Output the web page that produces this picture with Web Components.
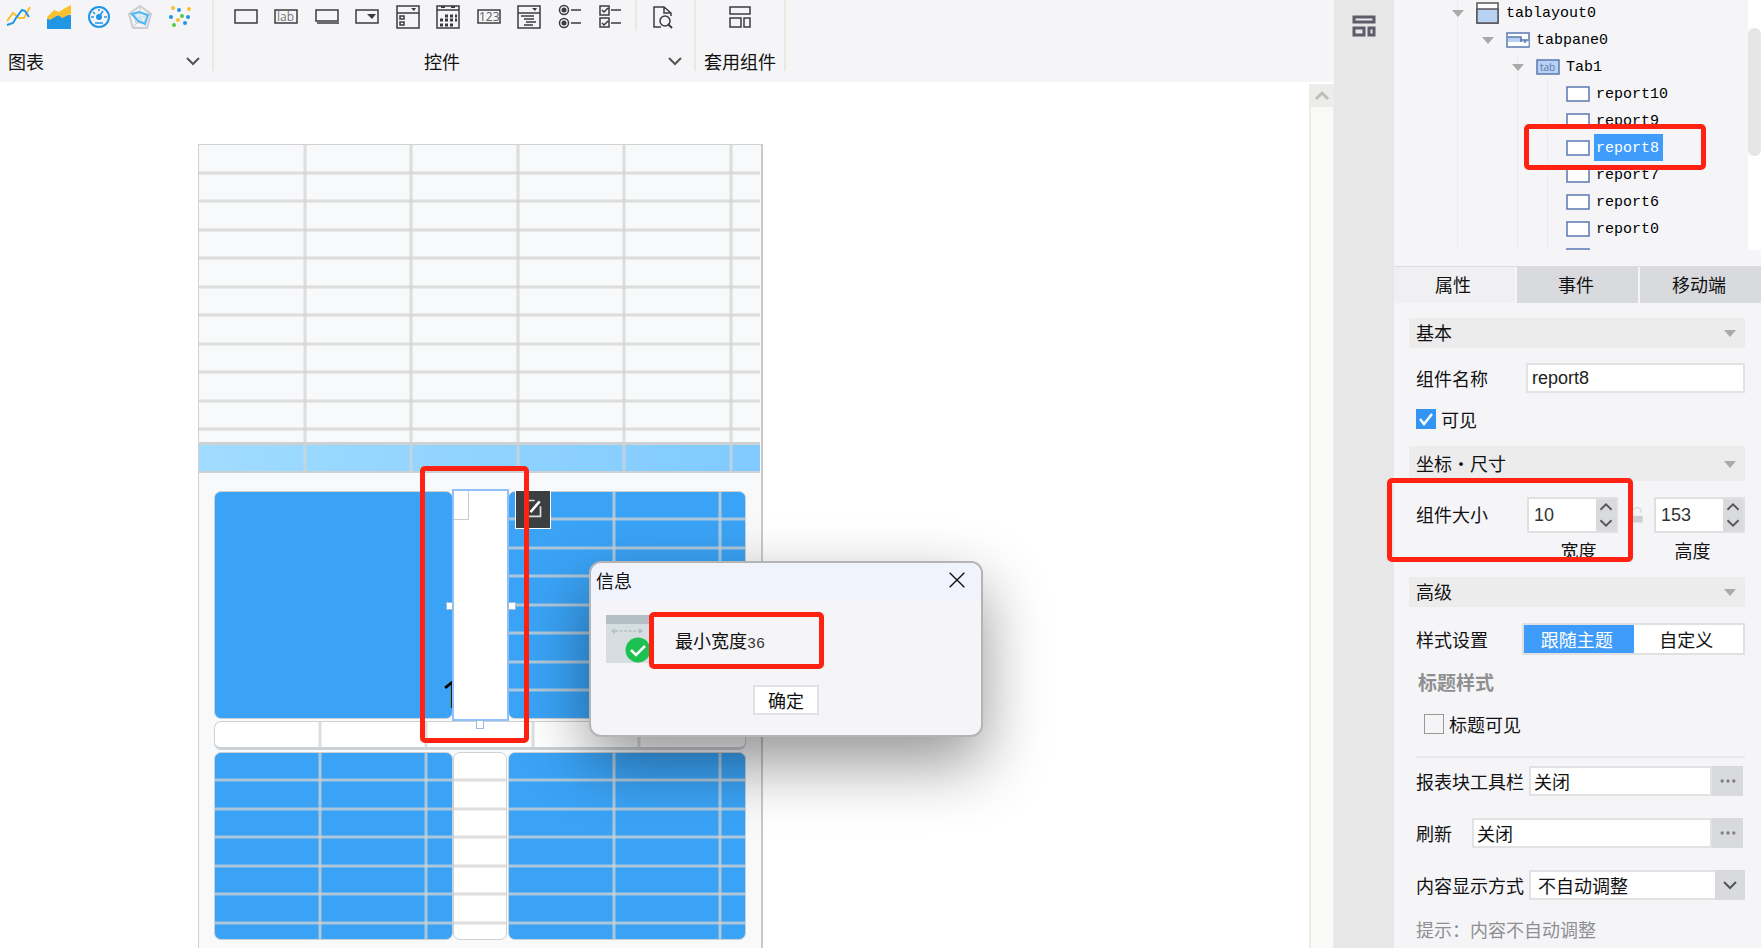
<!DOCTYPE html>
<html lang="zh-CN">
<head>
<meta charset="utf-8">
<title>报表设计器</title>
<style>
html,body{height:100%}
body{margin:0;overflow:hidden;background:#fff;color:#111;font:18px/24px "Noto Sans CJK SC",sans-serif}
</style>
</head>
<body>
<designer-app></designer-app>
<script>
const INK = '#3c3c40';
const GLYPHS = {
  line: '<g fill="none" stroke-width="2"><path stroke="#fbc02d" d="M1 16 7 8l6 5 5 0 6-11"/><path stroke="#1e96e6" d="M1 20l6-2 3-5 6-8 3 1 4 6"/></g>',
  area: '<path fill="#2196e3" d="M0 24V14l12-4 12 0v14z"/><path fill="#fbc02d" d="M0 12 7 5l5 2 6-4 6-3v9l-9 4-4-3-8 5-3-2z"/>',
  gauge: '<circle cx="12" cy="12" r="10" fill="none" stroke="#1e96e6" stroke-width="2"/><circle cx="12" cy="12" r="3" fill="#1e96e6"/><path stroke="#1e96e6" stroke-width="1.5" d="M12 12l4-6M4 12h3M17 12h3M12 4v2M6 7l2 2M8 18h8"/>',
  radar: '<g fill="none" stroke="#cdcdcf" stroke-width="2"><path d="M12 1l11 8-4 14H5L1 9z"/><path stroke-width="1" d="M12 1v12M1 9l11 4 11-4M5 23l7-10 7 10M12 7l6 4-2 7H8l-2-7z"/></g><path fill="#cfeafb" fill-opacity=".5" stroke="#4cb8f5" stroke-width="2" d="M4 9l7-2 9 3-3 9-7-3z"/>',
  scatter: '<g fill="#fbc02d"><circle cx="5" cy="3" r="2"/><circle cx="21" cy="4" r="2"/><circle cx="10" cy="15" r="2"/></g><g fill="#1e96e6"><circle cx="11" cy="5" r="2"/><circle cx="3" cy="12" r="2"/><circle cx="20" cy="12" r="2"/><circle cx="17" cy="18" r="2"/></g><g fill="#55c948"><circle cx="14" cy="11" r="2"/><circle cx="6" cy="20" r="2"/></g>',
  box: '<path class="s" d="M1 5h22v13H1z"/>',
  lab: '<path class="s" d="M1 5h22v13H1z"/><text x="3" y="16" font-size="12" font-family="Open Sans" fill="#777">lab</text>',
  field: '<path class="s" d="M1 5h22v11H1zM2 18h22"/>',
  combo: '<path class="s" d="M1 5h22v13H1z"/><path fill="#3c3c40" d="M12 9h9l-4 5z"/>',
  list: '<path class="s" d="M1 1h22v22H1zM1 8h22M4 11h4v3H4zM4 17h4v3H4z"/><path fill="#3c3c40" d="M15 3h5l-2 3z"/>',
  calendar: '<path class="s" d="M1 1h22v22H1zM1 5h22"/><path stroke="#3c3c40" stroke-width="3" stroke-dasharray="3 2" fill="none" d="M9 11h12M4 15h17M4 20h13"/><path stroke="#3c3c40" stroke-width="2" d="M5 2h4M15 2h4"/>',
  num: '<path class="s" d="M1 5h22v13H1z"/><text x="2" y="16" font-size="12" font-family="Noto Sans" fill="#666">123</text>',
  tree: '<path class="s" d="M1 1h22v22H1zM1 8h22M4 11h13M7 14h10M9 17h10M7 20h9"/><path fill="#3c3c40" d="M15 3h5l-2 3z"/>',
  radio: '<circle class="s" cx="6" cy="5" r="4.5"/><circle class="s" cx="6" cy="18" r="4.5"/><circle cx="6" cy="5" r="2.5" fill="#3c3c40"/><circle cx="6" cy="18" r="2.5" fill="#3c3c40"/><path class="s" d="M13 5h10M13 18h10"/>',
  check: '<path class="s" d="M2 1h9v9H2zM2 13h9v9H2zM4 5l2 2 4-4M4 18l2 2 4-4M13 5h10M13 18h10"/>',
  preview: '<path class="s" d="M11 22H4V2h10l7 6v3M14 2v6h6"/><circle class="s" cx="15" cy="16" r="5"/><path stroke="#3c3c40" stroke-width="2" d="M18 19l4 4"/>',
  blocks: '<path class="s" d="M2 2h20v7H2zM2 13h11v9H2zM16 13h6v9h-6z"/>',
  rail: '<path fill="none" stroke="#5d5d69" stroke-width="3" d="M2 3h20v5H2zM2 14h10v7H2zM17 14h5v7h-5z"/>',
  chevron: '<path fill="none" stroke="#555" stroke-width="2" d="M6 9l6 6 6-6"/>',
  up: '<path fill="none" stroke="#555" stroke-width="2" d="M6 15l6-6 6 6"/>',
  bigup: '<path fill="none" stroke="#bdbdbb" stroke-width="3" d="M6 15l6-6 6 6"/>',
  caret: '<path fill="#aaa" d="M6 9h12l-6 7z"/>',
  layout: '<path fill="#fff" stroke="#555" stroke-width="1.5" d="M1 2h21v20H1z"/><path fill="#b8d2f3" stroke="#555" stroke-width="1.5" d="M1 8h21v14H1z"/>',
  pane: '<path fill="#fff" stroke="#5878b0" stroke-width="1.5" d="M1 5h22v14H1z"/><path fill="#b8d2f3" d="M2 9h13v4h8v5H2z"/><path fill="#fff" d="M2 14h20v4H2z"/><path fill="none" stroke="#5878b0" stroke-width="1.5" d="M2 9h13v5M15 12h7M19 12v3"/>',
  tab: '<path fill="#b8d2f3" stroke="#5878b0" stroke-width="1.5" d="M1 5h22v14H1z"/><text x="4" y="16" font-size="10" font-family="Open Sans" fill="#5878b0">tab</text>',
  report: '<path fill="#fff" stroke="#5878b0" stroke-width="1.5" d="M1 5h22v14H1z"/>',
  edit: '<path fill="none" stroke="#ddd" stroke-width="2" d="M14 3H3v19h18V10"/><path stroke="#fff" stroke-width="3" d="M9 17 20 4"/>',
  close: '<path stroke="#111" stroke-width="1.5" d="M4 4l16 16M20 4 4 20"/>',
  lock: '<path fill="none" stroke="#ddd" stroke-width="2" d="M8 6q6-6 10 0v3"/><path fill="#cfcfd1" d="M4 13h16v8H4z"/>',
  dots: '<g fill="#808084"><circle cx="5" cy="12" r="2"/><circle cx="12" cy="12" r="2"/><circle cx="19" cy="12" r="2"/></g>'
};
const RESET = `<style>
*{box-sizing:border-box}
button,input,select{font:inherit;color:inherit;border:0;padding:0;margin:0;background:none;border-radius:0;outline:0;min-width:0}
button{display:flex;align-items:center;justify-content:center}
</style>`;
function define(name, markup) {
  customElements.define(name, class extends HTMLElement {
    connectedCallback() {
      if (this.shadowRoot) return;
      const root = this.attachShadow({mode: 'open'});
      root.innerHTML = RESET + (typeof markup === 'function' ? markup(this) : markup);
    }
  });
}

define('ui-icon', el => `<style>:host{display:block;flex:none;width:24px;height:24px}svg{display:block;width:100%;height:100%;overflow:visible}.s{fill:none;stroke:${INK};stroke-width:1.5}</style>
<svg viewBox="0 0 24 24" aria-hidden="true">${GLYPHS[el.getAttribute('name')]}</svg>`);

define('mark-box', `<style>:host{display:block;position:absolute;z-index:5;border:5px solid #ff2112;border-radius:5px;pointer-events:none;box-sizing:border-box}</style>`);

/* ribbon */
define('ribbon-group', `<style>
:host{display:flex;flex-direction:column;height:71px;border-right:2px solid #ebe9df;box-sizing:border-box}
.tools{display:flex;height:29px;padding-top:5px;justify-content:space-between;box-sizing:border-box}
footer{display:flex;margin-top:20px;align-items:center;height:24px}
</style><div class="tools" part="tools"><slot></slot></div><footer part="footer"><slot name="label"></slot></footer>`);

const tool = (n, t) => `<button title="${t}"><ui-icon name="${n}"></ui-icon></button>`;
define('tool-ribbon', `<style>
:host{display:flex;height:82px;background:#f5f5f8;flex:none}
.charts{width:214px}.charts::part(tools){margin:0 20px 0 6px}.charts::part(footer){padding:0 7px 0 8px}
.controls{width:482px}.controls::part(tools){margin:0 20px 0 20px}.controls::part(footer){padding:0 7px 0 210px}
.suite{width:90px}.suite::part(tools){justify-content:center}.suite::part(footer){justify-content:center}
[slot=label]{flex:none}
.more{margin-left:auto}
.ten{display:flex;justify-content:space-between;width:388px}
.sep{width:2px;height:31px;margin-top:-5px;background:#ebe9df}
</style>
<ribbon-group class="charts">${tool('line','折线图')}${tool('area','面积图')}${tool('gauge','仪表盘')}${tool('radar','雷达图')}${tool('scatter','散点图')}
<span slot="label">图表</span><button slot="label" class="more" aria-label="更多图表"><ui-icon name="chevron"></ui-icon></button></ribbon-group>
<ribbon-group class="controls"><div class="ten">${tool('box','文本')}${tool('lab','标签')}${tool('field','按钮')}${tool('combo','下拉框')}${tool('list','下拉复选框')}${tool('calendar','日期')}${tool('num','数字')}${tool('tree','下拉树')}${tool('radio','单选')}${tool('check','复选')}</div><span class="sep"></span>${tool('preview','查询')}
<span slot="label">控件</span><button slot="label" class="more" aria-label="更多控件"><ui-icon name="chevron"></ui-icon></button></ribbon-group>
<ribbon-group class="suite">${tool('blocks','套用组件')}<span slot="label">套用组件</span></ribbon-group>`);

/* canvas: a block ruled into report cells; cols and rows are line positions inside it */
define('report-block', el => {
  const list = a => (el.getAttribute(a) || '').split(' ').filter(Boolean);
  return `<style>
:host{display:block;position:absolute;overflow:hidden;box-sizing:border-box;border:1px solid #cdd1d4;border-radius:7px;background:#3aa3f6}
:host([plain]){background:#fff}
:host([flat]){border-radius:0;border-width:0 0 2px}
svg{position:absolute;left:0;top:0;width:100%;height:100%}line{stroke:#d3d3d3;stroke-opacity:.75;stroke-width:3}
</style><svg aria-hidden="true">${list('cols').map(x => `<line x1="${x}" x2="${x}" y1="0" y2="100%"/>`).join('')}${list('rows').map(y => `<line y1="${y}" y2="${y}" x1="0" x2="100%"/>`).join('')}</svg><slot></slot>`;
});

const LOWER = '27 56 84 113 141 170';
define('design-canvas', `<style>
:host{display:flex;flex:1;min-height:0;overflow:hidden;position:relative;background:#fff}
.stage{flex:1;position:relative;overflow:hidden}
.sheet{position:absolute;left:198px;top:62px;width:565px;bottom:-4px;background:#f8f9fb;border:1px solid #d2d2d2;border-right:2px solid #c9c9c9}
.selection{position:absolute;left:452px;top:407px;width:57px;height:232px;background:#fff;border:2px solid #8fc0fb}
.selection i{display:block;width:15px;height:29px;border:solid #ccc;border-width:0 1px 1px 0}
.handle{position:absolute;width:8px;height:8px;background:#fff;border:1px solid #9dbde0}
.value{position:absolute;left:226px;bottom:-1px;font:38px/52px "Noto Sans",sans-serif;color:#000}
.edit{position:absolute;left:515px;top:408px;width:36px;height:39px;background:#3c3f41;border:1px solid #fff;padding:0 0 4px}
.edit ui-icon{width:20px;height:22px}
.bar{width:25px;border:solid #efede2;border-width:0 1px 0 2px;background:#f9f9f7;flex:none;box-sizing:border-box;margin-top:2px}
.bar button{width:100%;height:23px;background:#ececea}
</style>
<div class="stage">
<div class="sheet"></div>
<report-block flat plain style="left:199px;top:63px;width:561px;height:300px;background:#f8f9fb;border-bottom-width:3px" cols="106 212 319 425 532" rows="28 56 85 113 142 170 199 227 256 284"></report-block>
<report-block flat style="left:199px;top:363px;width:561px;height:28px;background:linear-gradient(95deg,#a0dcff,#80caff)" cols="106 212 319 425 532"></report-block>
<report-block style="left:214px;top:409px;width:239px;height:228px"><span class="value">1</span></report-block>
<report-block style="left:508px;top:409px;width:238px;height:228px" cols="105 211" rows="27 56 84 113 141 170 198"></report-block>
<report-block plain style="left:214px;top:639px;width:532px;height:29px;border-bottom-width:3px" cols="105 211 318 424"></report-block>
<report-block style="left:214px;top:670px;width:239px;height:188px" cols="105 211" rows="${LOWER}"></report-block>
<report-block plain style="left:453px;top:670px;width:54px;height:188px" rows="${LOWER}"></report-block>
<report-block style="left:508px;top:670px;width:238px;height:188px" cols="105 211" rows="${LOWER}"></report-block>
<div class="selection"><i></i></div>
<span class="handle" style="left:446px;top:520px;width:7px"></span><span class="handle" style="left:508px;top:520px"></span><span class="handle" style="left:476px;top:638px;height:9px"></span>
<button class="edit" aria-label="编辑"><ui-icon name="edit"></ui-icon></button>
<mark-box style="left:420px;top:384px;width:109px;height:277px"></mark-box>
<message-dialog heading="信息">最小宽度<span style="font-family:'Liberation Mono',monospace;font-size:15px;color:#333">36</span></message-dialog>
</div>
<div class="bar"><button aria-label="向上滚动"><ui-icon name="bigup"></ui-icon></button></div>`);

define('message-dialog', el => `<style>
:host{display:flex;flex-direction:column;position:absolute;z-index:6;left:589px;top:479px;width:394px;height:176px;box-sizing:border-box;border:2px solid #b4b4b6;border-radius:12px;background:#f5f5f8;background-clip:padding-box;box-shadow:0 26px 64px rgba(0,0,0,.42)}
header{display:flex;align-items:center;justify-content:space-between;height:37px;flex:none;background:#f0f3fc;border-radius:10px 10px 0 0;padding:0 13px 3px 5px}
header ui-icon{width:22px;height:22px}
.body{display:flex;align-items:center;gap:21px;margin:15px 15px 0}
.pic{width:48px;height:48px;flex:none}
.text{padding-top:6px}
.ok{width:66px;height:30px;margin:22px auto 0;background:#fff;border:2px solid #e2e2e5}
mark-box{left:58px;top:49px;width:175px;height:57px}
</style>
<header><span>${el.getAttribute('heading')}</span><button aria-label="关闭"><ui-icon name="close"></ui-icon></button></header>
<div class="body"><svg class="pic" viewBox="0 0 48 48" aria-hidden="true"><path fill="#d6dee1" d="M0 0h48v48H0z"/><path fill="#b4bfc5" d="M0 0h48v9H0z"/><path stroke="#b4bfc5" stroke-width="1.5" stroke-dasharray="3 1.5" d="M9 16h24"/><path fill="#b4bfc5" d="M5 16l4-3v6zM37 16l-4-3v6z"/><circle cx="32" cy="35" r="12.5" fill="#1cc152"/><path fill="none" stroke="#fff" stroke-width="2.5" d="M25 35l5 5 9-9"/></svg>
<div class="text"><slot></slot></div></div>
<button class="ok">确定</button><mark-box></mark-box>`);

/* component tree */
define('tree-node', el => `<style>
:host{display:flex;align-items:center;height:27px;padding-left:calc(52px + var(--depth) * 30px);box-sizing:border-box;font:15px/24px "Liberation Mono",monospace;color:#000}
.twist{width:24px;height:24px;flex:none}
.icon{margin-left:6px}
span{height:27px;line-height:28px;padding:1px 4px 0 2px;margin-left:4px}
:host([selected]) span{background:#409cfa;color:#fff}
</style><div class="twist">${el.hasAttribute('open') ? '<ui-icon name="caret"></ui-icon>' : ''}</div><ui-icon class="icon" name="${el.getAttribute('icon')}"></ui-icon><span><slot></slot></span>`);

define('component-tree', `<style>
:host{display:flex;height:250px;overflow:hidden;flex:none}
.nodes{flex:1;margin-top:-1px;background:linear-gradient(#ececef,#ececef) 63px 0/1px 100% no-repeat,linear-gradient(#ececef,#ececef) 123px 54px/1px 100% no-repeat,linear-gradient(#ececef,#ececef) 153px 81px/1px 100% no-repeat}
.scroll{width:13px;background:#fff;padding-top:28px;box-sizing:border-box}
.scroll i{display:block;height:128px;background:#e6e6e7;border-radius:6px}
</style><div class="nodes">
<tree-node open icon="layout" style="--depth:0">tablayout0</tree-node>
<tree-node open icon="pane" style="--depth:1">tabpane0</tree-node>
<tree-node open icon="tab" style="--depth:2">Tab1</tree-node>
${['report10','report9','report8','report7','report6','report0','report4'].map(n => `<tree-node icon="report" style="--depth:3"${n === 'report8' ? ' selected' : ''}>${n}</tree-node>`).join('')}
</div><div class="scroll"><i></i></div>`);

/* property form */
define('section-bar', `<style>
:host{display:flex;justify-content:space-between;align-items:center;height:30px;margin:0 16px 0 15px;padding:0 3px 0 7px;background:#ececed;box-sizing:border-box}
span{padding-bottom:2px}
</style><span><slot></slot></span><ui-icon name="caret"></ui-icon>`);

define('number-spinner', el => `<style>
:host{display:flex;width:91px;height:36px;box-sizing:border-box;border:2px solid #e0e0e3;background:#fff}
input{flex:1;padding-left:5px;font:18px/24px "Liberation Sans",sans-serif;color:#333;appearance:textfield;-moz-appearance:textfield}
input::-webkit-inner-spin-button{appearance:none;display:none}
div{width:20px;background:#d9dadd}
button{width:20px;height:16px}ui-icon{width:22px;height:22px}
</style><input type="number" aria-label="${el.getAttribute('label')}" value="${el.getAttribute('value')}"><div><button aria-label="增加"><ui-icon name="up"></ui-icon></button><button aria-label="减少"><ui-icon name="chevron"></ui-icon></button></div>`);

define('property-panel', `<style>
:host{display:block;width:367px;flex:none;background:#f5f5f8;position:relative;z-index:2;height:100%}
nav{display:flex;gap:2px;margin-top:16px;border-top:1px solid #dcdcdf}
nav button{flex:1;height:36px;background:#d9dadd;padding:0 3px 3px 0}
nav button:first-child{background:#f0f0f2}
.row{display:flex;align-items:center;margin:0 16px 0 22px}
.row label{flex:none}
.field{flex:1;height:30px;border:2px solid #e2e2e5;background:#fff;padding:0 3px}
.latin{font-family:"Liberation Sans",sans-serif;color:#222;padding:0 4px}
.dots{width:31px;height:30px;background:#d9dadd;margin-right:2px}
.dots ui-icon{width:20px;height:20px}
input[type=checkbox]{appearance:none;width:20px;height:20px;margin:0 5px 0 0;border:1px solid #999;flex:none}
input[type=checkbox]:checked{background:#3395f3 url("data:image/svg+xml,%3Csvg xmlns='http://www.w3.org/2000/svg' viewBox='0 0 20 20'%3E%3Cpath fill='none' stroke='white' stroke-width='2.5' d='M4 10l4 5 8-10'/%3E%3C/svg%3E");border:0}
.size{align-items:flex-start}
.size label{line-height:34px;width:111px}
.dim{display:flex;flex-direction:column;align-items:center;gap:5px}
.seg{display:flex;width:223px;height:32px;margin-left:auto;border:2px solid #e0e0e3;background:#fff}
.seg button{flex:1;padding-right:4px}.seg .on{background:#409cfa;color:#fff}
h3{margin:15px 0 0 24px;font:bold 19px/24px "Noto Sans CJK SC",sans-serif;color:#8f8f92}
hr{border:0;border-top:2px solid #e8e8ea;margin:20px 16px 0 22px}
.pick{flex:1;display:grid;grid-template-columns:1fr 30px}
.pick select{grid-area:1/1/2/3;appearance:none;width:100%;height:30px;border:2px solid #e2e2e5;background:#fff;padding:0 7px}
.pick span{grid-area:1/2;background:#d9dadd;display:grid;place-items:center;pointer-events:none}
p{margin:17px 0 0 22px;color:#8f8f92}
</style>
<component-tree></component-tree>
<nav><button>属性</button><button>事件</button><button>移动端</button></nav>
<section-bar style="margin-top:15px">基本</section-bar>
<div class="row" style="margin-top:15px"><label for="name" style="width:110px">组件名称</label><input id="name" class="field latin" value="report8"></div>
<div class="row" style="margin-top:14px"><input type="checkbox" id="vis" checked><label for="vis">可见</label></div>
<section-bar style="margin-top:15px;height:35px">坐标・尺寸</section-bar>
<div class="row size" style="margin-top:16px"><label>组件大小</label>
<div class="dim"><number-spinner label="宽度" value="10"></number-spinner><span style="margin-left:12px">宽度</span></div>
<ui-icon name="lock" style="width:20px;height:36px;margin:0 auto"></ui-icon>
<div class="dim"><number-spinner label="高度" value="153"></number-spinner><span style="margin-right:14px">高度</span></div></div>
<section-bar style="margin-top:15px">高级</section-bar>
<div class="row" style="margin-top:16px"><span>样式设置</span><div class="seg"><button class="on">跟随主题</button><button>自定义</button></div></div>
<h3>标题样式</h3>
<div class="row" style="margin:18px 0 0 30px"><input type="checkbox" id="tv"><label for="tv">标题可见</label></div>
<hr>
<div class="row" style="margin-top:8px"><label for="bar" style="width:113px">报表块工具栏</label><input id="bar" class="field" value="关闭"><button class="dots" aria-label="设置工具栏"><ui-icon name="dots"></ui-icon></button></div>
<div class="row" style="margin-top:22px"><label for="ref" style="width:56px">刷新</label><input id="ref" class="field" value="关闭"><button class="dots" aria-label="设置刷新"><ui-icon name="dots"></ui-icon></button></div>
<div class="row" style="margin-top:22px"><label for="mode" style="width:113px">内容显示方式</label><div class="pick"><select id="mode"><option>不自动调整</option></select><span><ui-icon name="chevron"></ui-icon></span></div></div>
<p>提示：内容不自动调整</p>
<mark-box style="left:130px;top:124px;width:182px;height:46px"></mark-box>
<mark-box style="left:-7px;top:478px;width:246px;height:84px"></mark-box>`);

define('side-rail', `<style>:host{display:flex;justify-content:center;width:60px;flex:none;background:#e7e7e7;padding-top:14px;box-sizing:border-box}button{height:24px}</style><button aria-label="组件库"><ui-icon name="rail"></ui-icon></button>`);

define('designer-app', `<style>:host{display:flex;height:100vh}main{flex:1;min-width:0;display:flex;flex-direction:column}</style>
<main><tool-ribbon></tool-ribbon><design-canvas></design-canvas></main><side-rail></side-rail><property-panel></property-panel>`);
</script>
</body>
</html>
